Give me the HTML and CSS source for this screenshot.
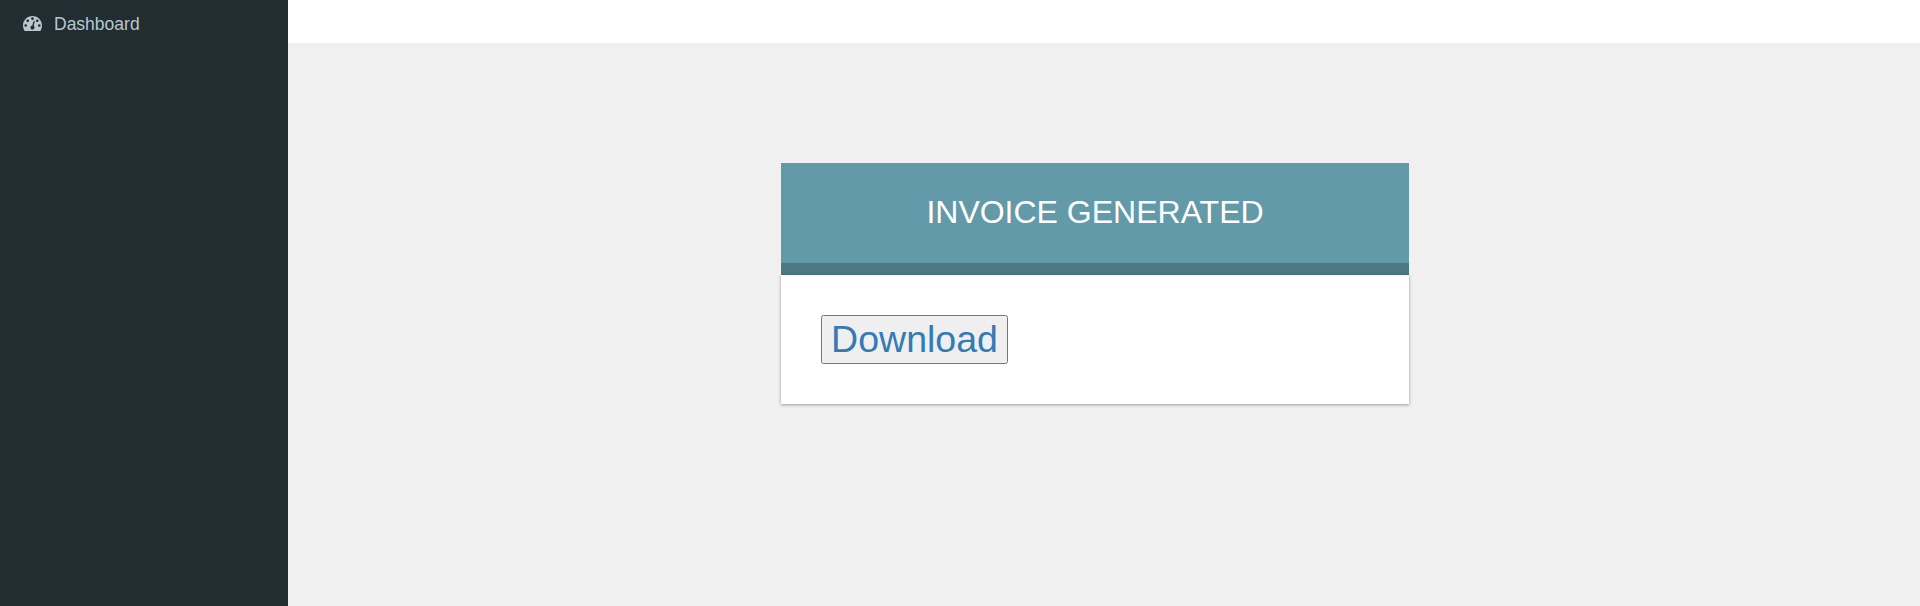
FILE: index.html
```html
<!DOCTYPE html>
<html lang="en">
<head>
<meta charset="utf-8">
<title>Invoice</title>
<link rel="stylesheet" href="styles.css">
</head>
<body>
<div class="layout">
  <aside class="sidebar">
    <a class="nav-item">
      <svg class="nav-icon" viewBox="0 0 1792 1536" aria-hidden="true"><path fill="currentColor" fill-rule="evenodd" d="M384 896a128 128 0 1 0-256 0 128 128 0 0 0 256 0zM576 448a128 128 0 1 0-256 0 128 128 0 0 0 256 0zM1004 929l101-382c9-34-12-69-45-78-34-9-69 12-79 45l-101 382c-79 6-148 61-170 141-27 103 34 208 136 235s208-34 235-136c21-80-12-162-77-207zM1664 896a128 128 0 1 0-256 0 128 128 0 0 0 256 0zM1024 256a128 128 0 1 0-256 0 128 128 0 0 0 256 0zM1472 448a128 128 0 1 0-256 0 128 128 0 0 0 256 0zM1792 896c0 173-49 340-141 483-12 18-32 29-54 29H195c-22 0-42-11-54-29C49 1237 0 1069 0 896 0 401 401 0 896 0s896 401 896 896z"/></svg>
      <span>Dashboard</span>
    </a>
  </aside>
  <div class="content">
    <header class="topbar"></header>
    <main class="page">
      <h1 class="card-title">INVOICE GENERATED</h1>
      <div class="card-body">
        <button class="download">Download</button>
      </div>
    </main>
  </div>
</div>
</body>
</html>
```
FILE: styles.css
```css
* {
  box-sizing: border-box;
}

body {
  margin: 0;
  font-family: "Liberation Sans", Arial, sans-serif;
  background: #f0f0f0;
}

.layout {
  display: flex;
  height: 606px;
}

.sidebar {
  flex: none;
  width: 288px;
  background: #222d32;
}

.nav-item {
  display: flex;
  align-items: center;
  height: 48px;
  padding-left: 23px;
  gap: 12px;
  color: #b8c7ce;
  font-size: 17.5px;
}

.nav-icon {
  width: 19px;
  height: 16.3px;
  margin-top: 1px;
}

.content {
  flex: 1;
}

.topbar {
  height: 43px;
  background: #fff;
}

.page {
  width: 628px;
  margin: 120px 0 0 493px;
}

.card-title {
  height: 112px;
  margin: 0;
  border-bottom: 12px solid #4d7782;
  background: #629aa9;
  color: #fff;
  font-size: 32px;
  font-weight: 400;
  line-height: 98px;
  text-align: center;
}

.card-body {
  display: flex;
  height: 129px;
  padding: 40px;
  background: #fff;
  box-shadow: 0 1px 3px rgba(0, 0, 0, 0.36);
}

.download {
  width: 187px;
  height: 49px;
  padding: 0;
  border: 1px solid #767676;
  border-radius: 2.5px;
  background: #efefef;
  color: #337ab7;
  font-family: inherit;
  font-size: 37.5px;
  line-height: 43px;
}
```
